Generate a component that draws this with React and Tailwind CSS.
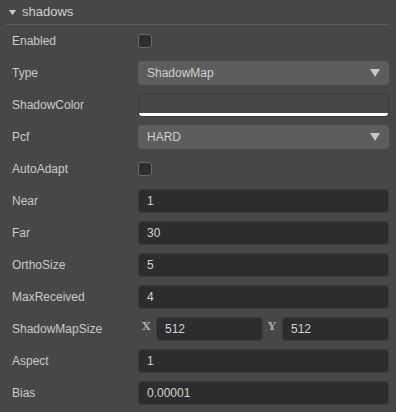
const font = { fontFamily: '"Liberation Sans", Arial, sans-serif' }
const serif = { fontFamily: '"DejaVu Serif", "Liberation Serif", serif' }

function Row({ label, children }) {
  return (
    <div className="flex items-center h-8">
      <div className="w-[138px] pl-3 text-[12px] text-[#cacaca] shrink-0">{label}</div>
      <div className="flex-1 pr-[7px] flex items-center">{children}</div>
    </div>
  )
}

function Checkbox() {
  return <div className="w-[14px] h-[14px] rounded-[3px] border border-[#6a6a6a] bg-[#2e2e2e]" />
}

function Select({ value }) {
  return (
    <div className="flex-1 h-6 rounded-[4px] bg-[#5d5d5d] flex items-center justify-between px-[9px] text-[12px] text-[#cfcfcf]">
      <span>{value}</span>
      <svg width="10" height="8" viewBox="0 0 10 8">
        <path d="M0 0 L10 0 L5 8 Z" fill="#c8c8c8" />
      </svg>
    </div>
  )
}

function Input({ value }) {
  return (
    <div className="flex-1 h-6 rounded-[4px] border border-[#3c3c3c] bg-[#2d2d2d] flex items-center px-2 text-[12px] text-[#d4d4d4]">
      {value}
    </div>
  )
}

export default function App() {
  return (
    <div className="w-[396px] h-[412px] bg-[#474747] overflow-hidden" style={font}>
      <div className="flex items-center h-6 pl-[9px] gap-[6px] text-[13px] text-[#cfcfcf]">
        <svg width="7" height="5" viewBox="0 0 7 5">
          <path d="M0 0 L7 0 L3.5 5 Z" fill="#d0d0d0" />
        </svg>
        <span className="-mt-[1px]">shadows</span>
      </div>
      <div className="mx-[6px] h-px bg-[#5a5a5a]" />
      <Row label="Enabled"><Checkbox /></Row>
      <Row label="Type"><Select value="ShadowMap" /></Row>
      <Row label="ShadowColor">
        <div className="flex-1 h-6 rounded-[4px] border border-[#3a3a3a] bg-[#474747] flex flex-col justify-end overflow-hidden">
          <div className="h-[3px] bg-white" />
        </div>
      </Row>
      <Row label="Pcf"><Select value="HARD" /></Row>
      <Row label="AutoAdapt"><Checkbox /></Row>
      <Row label="Near"><Input value="1" /></Row>
      <Row label="Far"><Input value="30" /></Row>
      <Row label="OrthoSize"><Input value="5" /></Row>
      <Row label="MaxReceived"><Input value="4" /></Row>
      <Row label="ShadowMapSize">
        <div className="flex-1 flex items-center">
          <span className="w-[18px] pl-[4px] -mt-[3px] text-[11px] font-bold text-[#aaaaaa]" style={serif}>X</span>
          <Input value="512" />
          <span className="w-[19px] pl-[5px] -mt-[3px] text-[11px] font-bold text-[#aaaaaa]" style={serif}>Y</span>
          <Input value="512" />
        </div>
      </Row>
      <Row label="Aspect"><Input value="1" /></Row>
      <Row label="Bias"><Input value="0.00001" /></Row>
    </div>
  )
}
